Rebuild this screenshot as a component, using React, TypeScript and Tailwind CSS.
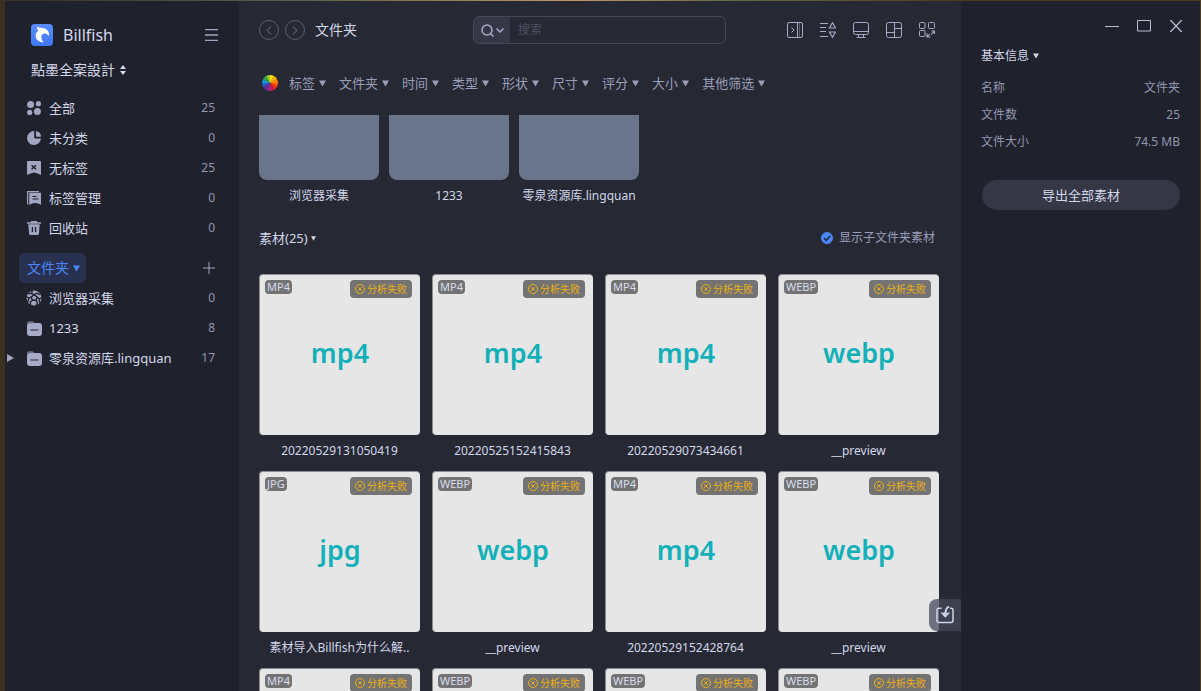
import React from 'react';

const FILTERS = ['标签', '文件夹', '时间', '类型', '形状', '尺寸', '评分', '大小', '其他筛选'];

const FOLDERS = ['浏览器采集', '1233', '零泉资源库.lingquan'];

const ASSETS = [
  { ext: 'mp4', name: '20220529131050419' },
  { ext: 'mp4', name: '20220525152415843' },
  { ext: 'mp4', name: '20220529073434661' },
  { ext: 'webp', name: '__preview' },
  { ext: 'jpg', name: '素材导入Billfish为什么解..' },
  { ext: 'webp', name: '__preview' },
  { ext: 'mp4', name: '20220529152428764' },
  { ext: 'webp', name: '__preview' },
  { ext: 'mp4', name: '__preview' },
  { ext: 'webp', name: '__preview' },
  { ext: 'webp', name: '__preview' },
  { ext: 'webp', name: '__preview' },
];

const INFO = [
  { label: '名称', value: '文件夹' },
  { label: '文件数', value: '25' },
  { label: '文件大小', value: '74.5 MB' },
];

const WHEEL = ['#ffe100', '#ffb400', '#ff8a00', '#ff5a10', '#f5261c', '#c2185b', '#8e2a8e', '#5b2da0', '#1f5fd0', '#1698d8', '#2fa84a', '#9acb2c'];

function AllIcon() {
  return (
    <svg width="14" height="14" viewBox="0 0 14 14" fill="currentColor">
      <circle cx="3.6" cy="3.6" r="3.5" />
      <circle cx="11.4" cy="2.7" r="2.6" />
      <circle cx="2.7" cy="11.4" r="2.6" />
      <circle cx="10.4" cy="10.4" r="3.5" />
    </svg>
  );
}

function PieIcon() {
  return (
    <svg width="14" height="14" viewBox="0 0 14 14" fill="currentColor">
      <path d="M7.2 0A7 7 0 1 0 14 7.6H8.2a1 1 0 0 1-1-1z" />
      <path d="M9 0a6 6 0 0 1 5 5.8H9.8a.8.8 0 0 1-.8-.8z" />
    </svg>
  );
}

function UntaggedIcon() {
  return (
    <svg width="14" height="14" viewBox="0 0 14 14">
      <path d="M.8 0h12.4q.8 0 .8.8V14l-3.4-1.5L7 11.4l-3.6 1.1L0 14V.8Q0 0 .8 0z" fill="currentColor" />
      <path d="M4.6 4.2l4.4 4M9 4.2l-4.4 4" stroke="#1f212c" strokeWidth="1.5" />
    </svg>
  );
}

function TagsIcon() {
  return (
    <svg width="14" height="14" viewBox="0 0 14 14">
      <path d="M.6 13.5V.6H12" fill="none" stroke="currentColor" strokeWidth="1.2" />
      <path d="M2.2 1.8h11.8v12.2l-2.8-1.5-3-.6-3 .6L2.2 14z" fill="currentColor" />
      <path d="M5.500 5.500h4M5.500 8h6" stroke="#1f212c" strokeWidth="1" />
    </svg>
  );
}

function TrashIcon() {
  return (
    <svg width="14" height="14" viewBox="0 0 14 14">
      <path d="M0 1.200h4V0h6v1.200h4v1.600H0zM1.300 3.200h11.400l-.8 9.600q-.1 1.200-1.300 1.200H3.400q-1.200 0-1.300-1.200z" fill="currentColor" />
      <path d="M5.400 6v5M8.600 6v5" stroke="#1f212c" strokeWidth="1.300" />
    </svg>
  );
}

function CollectIcon() {
  return (
    <svg width="16" height="16" viewBox="0 0 16 16" className="-ml-px">
      <circle cx="8" cy="8" r="7.500" fill="currentColor" />
      <g fill="none" stroke="#1f212c" strokeWidth="1.400">
        <path d="M8.300 4.800l2.800 2.100-1 3.400H6.500L5.200 7z" />
        <path d="M8.300 4.800L5.800 3.400 6 0M8.300 4.800l2.200-1.600L14 4.500M11.100 6.900l2 1.900 2.900-.8M10.100 10.300l1.200 2.200-1 3.500M6.500 10.300L4.300 12l.2 3M5.200 7L3 8.200 0 6.500M5.800 3.400L2 3.500M3 8.200L1.500 12.500M13.100 8.800l.6 4.200" />
      </g>
    </svg>
  );
}

function FolderIcon() {
  return (
    <svg width="15" height="15" viewBox="0 0 15 15">
      <path d="M0 6V2.600Q0 .4 2.200.4h3q1 0 1.500.9L7.500 3z" fill="#6c728a" />
      <rect y="2" width="15" height="13" rx="3" fill="#a6abc8" />
      <path d="M0 4.500V2.600Q0 .4 2.200.4h3q1 0 1.500.9L7.200 2.200H3Q.8 2.200 0 4.500z" fill="#6c728a" />
      <path d="M3.500 9h8" stroke="#4c5168" strokeWidth="1.500" />
    </svg>
  );
}

const NAV = [
  { label: '全部', count: 25, icon: <AllIcon /> },
  { label: '未分类', count: 0, icon: <PieIcon /> },
  { label: '无标签', count: 25, icon: <UntaggedIcon /> },
  { label: '标签管理', count: 0, icon: <TagsIcon /> },
  { label: '回收站', count: 0, icon: <TrashIcon /> },
];

const TREE = [
  { label: '浏览器采集', count: 0, icon: <CollectIcon />, nested: false },
  { label: '1233', count: 8, icon: <FolderIcon />, nested: false },
  { label: '零泉资源库.lingquan', count: 17, icon: <FolderIcon />, nested: true },
];

function Caret({ size = 7 }: { size?: number }) {
  return (
    <svg width={size} height={size} viewBox="0 0 7 7" fill="currentColor" className="shrink-0">
      <path d="M0 .5h7L3.500 6.500z" />
    </svg>
  );
}

function Logo() {
  return (
    <svg width="22" height="22" viewBox="0 0 66 66">
      <defs>
        <linearGradient id="logo" x1="0" y1="0" x2="0" y2="1">
          <stop offset="0" stopColor="#5a8cff" />
          <stop offset="1" stopColor="#3f78fb" />
        </linearGradient>
      </defs>
      <rect width="66" height="66" rx="12" fill="url(#logo)" />
      <path d="M17 9C22 8 27 11 32 12C46 12 56 21 54 37C48 26 38 27 33 32C29 38 31 48 38 55C24 56 13 46 14 33C15 27 18 23 22 20C19 17 18 13 17 9Z" fill="#fff" />
    </svg>
  );
}

function ColorWheel() {
  const point = (i: number) => {
    const a = (i * Math.PI) / 6 - Math.PI / 2;
    return `${8 + 8 * Math.cos(a)} ${8 + 8 * Math.sin(a)}`;
  };
  return (
    <svg width="16" height="16" viewBox="0 0 16 16">
      {WHEEL.map((c, i) => (
        <path key={c} d={`M8 8L${point(i)}A8 8 0 0 1 ${point(i + 1)}Z`} fill={c} />
      ))}
    </svg>
  );
}

function SideRow({ label, count, icon, nested }: { label: string; count: number; icon: React.ReactNode; nested?: boolean }) {
  return (
    <li>
      <a href="#" className="flex h-[30px] items-center pl-[2px] pr-6 text-[13px] text-[#d3d7ea]">
        <span className="flex w-5 shrink-0 items-center text-[#a1a6c0]">
          {nested && (
            <svg width="7" height="8" viewBox="0 0 7 8" fill="currentColor">
              <path d="M0 0l7 4-7 4z" />
            </svg>
          )}
        </span>
        <span className="flex w-[22px] shrink-0 items-center text-[#a1a6c0]">{icon}</span>
        <span className="flex-1 truncate">{label}</span>
        <span className="text-[12px] text-[#9297b0]">{count}</span>
      </a>
    </li>
  );
}

function Sidebar() {
  return (
    <aside className="flex w-[234px] shrink-0 flex-col bg-[#1f212c]">
      <div className="mt-[23px] flex h-[22px] items-center pl-[26px] pr-[21px]">
        <Logo />
        <span className="ml-[10px] text-[16px] text-[#d3d7ea]">Billfish</span>
        <button aria-label="菜单" className="ml-auto text-[#a1a6c0]">
          <svg width="13" height="12" viewBox="0 0 13 12" stroke="currentColor" strokeWidth="1.300">
            <path d="M0 .5h13M0 6h13M0 11.500h13" />
          </svg>
        </button>
      </div>
      <button className="mt-[9px] flex h-[30px] items-center gap-[5px] pl-[26px] text-[14px] text-[#d3d7ea]">
        點墨全案設計
        <svg width="6" height="10" viewBox="0 0 6 10" fill="currentColor">
          <path d="M3 0l3 4H0zM3 10l3-4H0z" />
        </svg>
      </button>
      <ul className="mt-2">
        {NAV.map(item => <SideRow key={item.label} {...item} />)}
      </ul>
      <div className="mt-[10px] flex h-[30px] items-center justify-between pl-[14px] pr-6">
        <button className="flex h-[30px] items-center gap-[4px] rounded-md bg-[#283150] pl-2 pr-[6px] text-[14px] text-[#4c86fb]">
          文件夹
          <Caret />
        </button>
        <button aria-label="新建文件夹" className="text-[#a1a6c0]">
          <svg width="12" height="12" viewBox="0 0 12 12" stroke="currentColor">
            <path d="M6 0v12M0 6h12" />
          </svg>
        </button>
      </div>
      <ul>
        {TREE.map(item => <SideRow key={item.label} {...item} />)}
      </ul>
    </aside>
  );
}

const TOOLS = [
  {
    label: '展开面板',
    icon: <><rect x=".5" y=".5" width="15" height="15" rx="1.500" /><path d="M10.500.5v15" /><path d="M12.500.5v15" opacity=".4" /><path d="M4.500 5.500L7 8l-2.500 2.500" /></>,
  },
  {
    label: '排序',
    icon: <><path d="M0 1.500h8M0 5.500h6M0 9.500h6M0 14.500h8" /><path d="M12.500.8L15.500 6h-6zM12.500 15.200l3-5.200h-6z" strokeWidth="1.200" /></>,
  },
  {
    label: '显示器',
    icon: <><rect x=".5" y=".5" width="15" height="12" rx="2" /><path d="M.5 9.500h15M5.500 12.500v2.500M10.500 12.500v2.500M3.500 15.500h9" /></>,
  },
  {
    label: '布局',
    icon: <><rect x=".5" y=".5" width="15" height="15" rx="2" /><path d="M8.500.5v15M8.500 6.500h7M.5 10.500h8" /></>,
  },
  {
    label: '缩放',
    icon: <><rect x=".5" y=".5" width="5.500" height="6" rx="1" /><rect x="9.500" y=".5" width="6" height="6" rx="1" /><rect x=".5" y="8.500" width="5.500" height="6" rx="1" /><path d="M12.500 9h3v3M15.200 9.300l-3 3M8 11.500V15h3.500M8.300 14.700l2.500-2.500" strokeWidth="1.200" /></>,
  },
];

function Toolbar() {
  return (
    <header className="flex h-[58px] shrink-0 items-center pl-5 pr-[26px]">
      <div className="flex items-center gap-[6px]">
        <button aria-label="后退" className="flex h-5 w-5 items-center justify-center rounded-full border border-[#5b5e71] text-[#777b92]">
          <svg width="6" height="9" viewBox="0 0 6 9" fill="none" stroke="currentColor"><path d="M5 .5l-4 4 4 4" /></svg>
        </button>
        <button aria-label="前进" className="flex h-5 w-5 items-center justify-center rounded-full border border-[#5b5e71] text-[#777b92]">
          <svg width="6" height="9" viewBox="0 0 6 9" fill="none" stroke="currentColor"><path d="M1 .5l4 4-4 4" /></svg>
        </button>
      </div>
      <h1 className="ml-[10px] text-[14px] text-[#d3d7ea]">文件夹</h1>
      <div className="ml-[116px] flex h-7 w-[253px] overflow-hidden rounded-md border border-[#454857]">
        <button aria-label="搜索类型" className="flex w-9 shrink-0 items-center justify-center gap-[2px] bg-[#353747] text-[#a6abc6]">
          <svg width="13" height="13" viewBox="0 0 13 13" fill="none" stroke="currentColor" strokeWidth="1.500">
            <circle cx="6" cy="6" r="5" />
            <path d="M9.500 9.500l3 3" />
          </svg>
          <svg width="8" height="5" viewBox="0 0 8 5" fill="none" stroke="currentColor" strokeWidth="1.500">
            <path d="M.5.500L4 4 7.500.500" />
          </svg>
        </button>
        <input
          type="text"
          aria-label="搜索"
          placeholder="搜索"
          className="min-w-0 flex-1 bg-transparent px-2 text-[12px] text-[#d3d7ea] outline-none placeholder:text-[#4c4f60]"
        />
      </div>
      <div className="ml-auto flex gap-[17px] text-[#a6abc6]">
        {TOOLS.map(t => (
          <button key={t.label} aria-label={t.label}>
            <svg width="16" height="16" viewBox="0 0 16 16" fill="none" stroke="currentColor">{t.icon}</svg>
          </button>
        ))}
      </div>
    </header>
  );
}

function FilterBar() {
  return (
    <div className="flex h-14 shrink-0 items-center pb-2 pl-[23px] text-[13px] text-[#9a9fb9]">
      <button aria-label="颜色" className="mr-[11px]"><ColorWheel /></button>
      <div className="flex gap-[13px]">
        {FILTERS.map(f => (
          <button key={f} className="flex items-center gap-[4px] whitespace-nowrap">
            {f}
            <Caret />
          </button>
        ))}
      </div>
    </div>
  );
}

function AssetCard({ ext, name }: { ext: string; name: string }) {
  return (
    <figure className="min-w-0">
      <div className="relative flex aspect-square items-center justify-center rounded border-l border-t border-[#8d8d8f] bg-[#e6e6e6] pb-1">
        <span className="absolute left-[5px] top-[5px] rounded bg-[#737373] px-[2px] text-[11px] leading-[14px] text-[#d9dcee]">
          {ext.toUpperCase()}
        </span>
        <span className="absolute right-2 top-[5px] flex h-[18px] items-center gap-[2px] rounded bg-[#737373] px-[5px] text-[10px] text-[#f0b010]">
          <svg width="10" height="10" viewBox="0 0 10 10" fill="none" stroke="currentColor">
            <circle cx="5" cy="5" r="4.500" />
            <path d="M3.200 3.200l3.600 3.600M6.800 3.200L3.200 6.800" />
          </svg>
          分析失败
        </span>
        <span className="text-[27px] font-semibold text-[#12b0b8]">{ext}</span>
      </div>
      <figcaption className="truncate text-center text-[12px] leading-8 text-[#d3d7ea]">{name}</figcaption>
    </figure>
  );
}

function Content() {
  return (
    <div className="min-h-0 flex-1 overflow-y-auto pl-5 pr-[22px] [scrollbar-width:none]">
      <div className="flex gap-[10px]">
        {FOLDERS.map(name => (
          <figure key={name} className="w-[120px]">
            <div className="h-[65px] rounded-b-lg bg-[#6a748b]" />
            <figcaption className="whitespace-nowrap text-center text-[12px] leading-8 text-[#d3d7ea]">{name}</figcaption>
          </figure>
        ))}
      </div>
      <div className="mb-5 mt-[10px] flex h-8 items-center justify-between pr-1">
        <button className="flex items-center gap-[3px] text-[13px] text-[#d3d7ea]">
          素材(25)
          <Caret size={5} />
        </button>
        <label className="flex items-center gap-[6px] text-[12px] text-[#9a9fb9]">
          <span className="relative flex">
            <input type="checkbox" defaultChecked className="peer h-3 w-3 appearance-none rounded-full border border-[#9a9fb9] checked:border-[#4c86fb] checked:bg-[#4c86fb]" />
            <svg width="12" height="12" viewBox="0 0 12 12" fill="none" stroke="#1f2540" strokeWidth="1.500" className="pointer-events-none absolute inset-0 hidden peer-checked:block">
              <path d="M3 6l2.200 2.300L9.300 4" />
            </svg>
          </span>
          显示子文件夹素材
        </label>
      </div>
      <div className="grid grid-cols-4 gap-x-3 gap-y-1">
        {ASSETS.map((a, i) => <AssetCard key={i} {...a} />)}
      </div>
    </div>
  );
}

function InfoPanel() {
  return (
    <aside className="flex w-[239px] shrink-0 flex-col bg-[#1f212c] text-[12px]">
      <div className="mt-[17px] flex h-4 items-center justify-end gap-[18px] pr-[17px] text-[#b9bdd3]">
        <button aria-label="最小化">
          <svg width="14" height="12" viewBox="0 0 14 12" stroke="currentColor"><path d="M0 6.500h14" /></svg>
        </button>
        <button aria-label="最大化">
          <svg width="14" height="12" viewBox="0 0 14 12" fill="none" stroke="currentColor"><path d="M.5.500h13v10.500H.500z" /></svg>
        </button>
        <button aria-label="关闭">
          <svg width="14" height="12" viewBox="0 0 14 12" fill="none" stroke="currentColor" strokeWidth="1.300"><path d="M1.300 0l11.500 12M12.800 0L1.300 12" /></svg>
        </button>
      </div>
      <button className="mt-3 flex h-5 items-center gap-1 pl-5 text-[#d3d7ea]">
        基本信息
        <Caret size={6} />
      </button>
      <dl className="mt-2 pl-5 pr-5 leading-[27px] text-[#9297b0]">
        {INFO.map(row => (
          <div key={row.label} className="flex justify-between">
            <dt>{row.label}</dt>
            <dd>{row.value}</dd>
          </div>
        ))}
      </dl>
      <button className="ml-[21px] mr-5 mt-[25px] h-[30px] rounded-full bg-[#353747] text-[13px] text-[#d3d7ea]">
        导出全部素材
      </button>
    </aside>
  );
}

export default function App() {
  return (
    <div className="flex h-screen overflow-hidden bg-[linear-gradient(90deg,#3a3020,#5d5f49_25%,#c09a60_48%,#6b6a4c_60%,#4a3a22_80%,#4a3a22)] pl-[5px] pr-px pt-px leading-5 font-['Noto_Sans','Noto_Sans_CJK_SC',sans-serif]">
      <Sidebar />
      <main className="relative flex min-w-0 flex-1 flex-col bg-[#262833]">
        <Toolbar />
        <FilterBar />
        <Content />
        <button aria-label="导入" className="absolute bottom-[60px] right-0 flex h-8 w-8 items-center justify-center rounded-l-lg bg-[#454859]/75 text-[#cdd2ea]">
          <svg width="18" height="18" viewBox="0 0 18 18" fill="none" stroke="currentColor" strokeWidth="1.500">
            <path d="M5.500 2.200H3Q1 2.200 1 4.200v10.300q0 2 2 2h12q2 0 2-2V4.200q0-2-2-2h-1" />
            <path d="M13 .500Q9.500 2.500 9.500 7" strokeWidth="2" />
            <path d="M4.800 6.500l4.500 5 4.500-5q-2.500 1-4.500 0-2 1-4.500 0z" fill="currentColor" strokeWidth=".5" />
          </svg>
        </button>
      </main>
      <InfoPanel />
    </div>
  );
}
